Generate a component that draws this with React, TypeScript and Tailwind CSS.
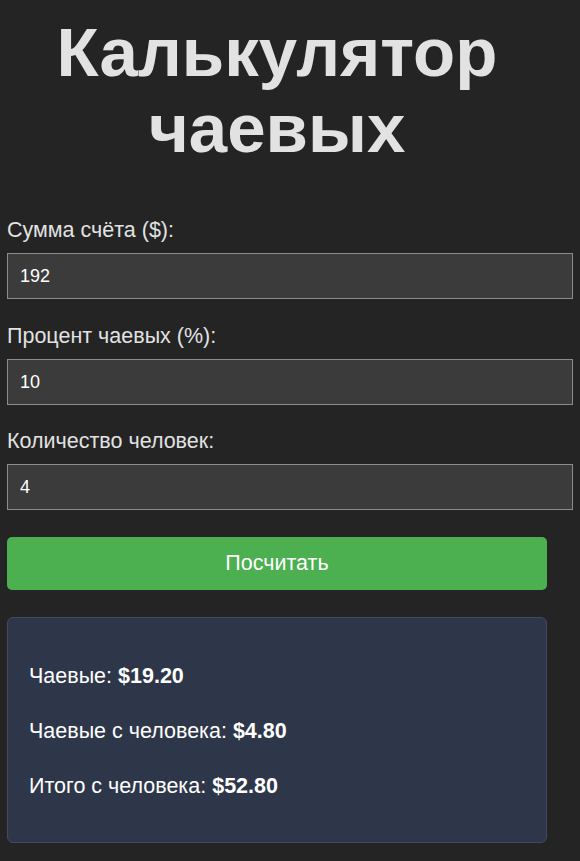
import React, { useState } from 'react';

const font = { fontFamily: '"Liberation Sans", Arial, sans-serif' };

interface FieldProps {
    label: string;
    value: string;
    onChange: (v: string) => void;
    className?: string;
}

const Field: React.FC<FieldProps> = ({ label, value, onChange, className }) => (
    <div className={className}>
        <label className="block text-[21.5px] leading-[24px] text-[#e2e2e2]">{label}</label>
        <input
            type="text"
            value={value}
            onChange={(e) => onChange(e.target.value)}
            className="mt-[11px] block h-[46px] w-[566px] border border-[#8c8c8c] bg-[#3b3b3b] px-[12px] text-[18px] text-white outline-none"
        />
    </div>
);

const App: React.FC = () => {
    const [bill, setBill] = useState('192');
    const [tip, setTip] = useState('10');
    const [people, setPeople] = useState('4');

    const billNum = parseFloat(bill) || 0;
    const tipNum = parseFloat(tip) || 0;
    const peopleNum = parseInt(people) || 1;
    const tipTotal = (billNum * tipNum) / 100;
    const tipPer = tipTotal / peopleNum;
    const totalPer = (billNum + tipTotal) / peopleNum;

    return (
        <div className="min-h-[861px] w-full overflow-hidden bg-[#242424]" style={font}>
            <div className="ml-[7px] w-[540px] pt-[15px]">
                <h1 className="text-center text-[69px] font-bold leading-[76px] text-[#e2e2e2]">
                    Калькулятор чаевых
                </h1>

                <Field className="mt-[51px]" label="Сумма счёта ($):" value={bill} onChange={setBill} />
                <Field className="mt-[25px]" label="Процент чаевых (%):" value={tip} onChange={setTip} />
                <Field className="mt-[24px]" label="Количество человек:" value={people} onChange={setPeople} />

                <button className="mt-[27px] block h-[53px] w-full rounded-[5px] bg-[#4caf50] text-[21.5px] text-white">
                    Посчитать
                </button>

                <div className="mt-[27px] flex flex-col gap-[31px] rounded-[6px] border border-[#414b5e] bg-[#2e3749] px-[21px] pt-[46px] pb-[44px] text-[21.5px] leading-[24px] text-white">
                    <p>
                        Чаевые: <b>${tipTotal.toFixed(2)}</b>
                    </p>
                    <p>
                        Чаевые с человека: <b>${tipPer.toFixed(2)}</b>
                    </p>
                    <p>
                        Итого с человека: <b>${totalPer.toFixed(2)}</b>
                    </p>
                </div>
            </div>
        </div>
    );
};

export default App;
